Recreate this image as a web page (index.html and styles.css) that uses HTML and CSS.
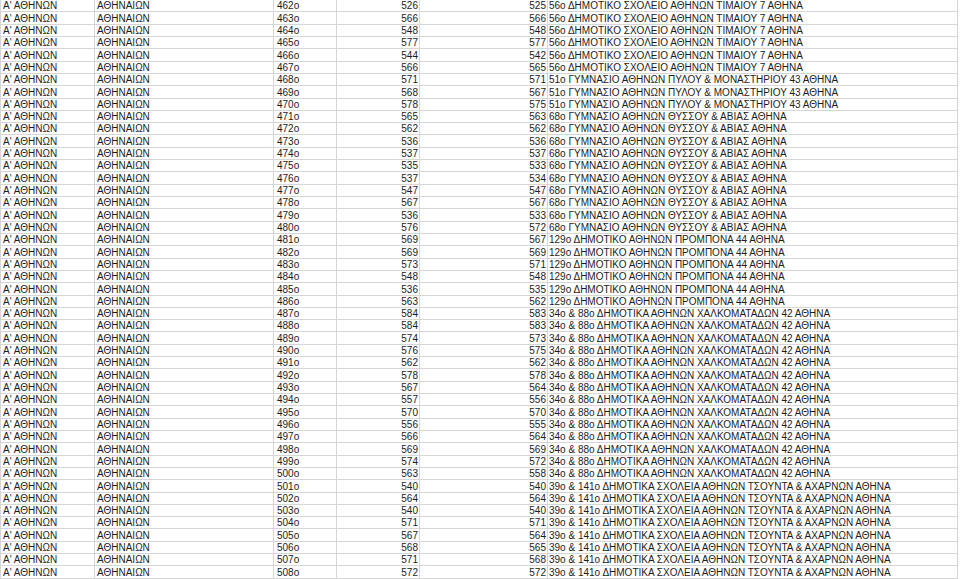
FILE: index.html
```html
<!DOCTYPE html>
<html lang="el">
<head>
<meta charset="utf-8">
<title>Αποτελέσματα</title>
<link rel="stylesheet" href="styles.css">
</head>
<body>
<table class="sheet">
<colgroup>
<col class="c-a"><col class="c-b"><col class="c-c"><col class="c-d"><col class="c-e"><col class="c-f">
</colgroup>
<tbody id="rows">
<tr><td>Α' ΑΘΗΝΩΝ</td><td>ΑΘΗΝΑΙΩΝ</td><td class="ord">462ο</td><td class="num">526</td><td class="num">525</td><td class="name">56ο ΔΗΜΟΤΙΚΟ ΣΧΟΛΕΙΟ ΑΘΗΝΩΝ ΤΙΜΑΙΟΥ 7 ΑΘΗΝΑ</td></tr>
<tr><td>Α' ΑΘΗΝΩΝ</td><td>ΑΘΗΝΑΙΩΝ</td><td class="ord">463ο</td><td class="num">566</td><td class="num">566</td><td class="name">56ο ΔΗΜΟΤΙΚΟ ΣΧΟΛΕΙΟ ΑΘΗΝΩΝ ΤΙΜΑΙΟΥ 7 ΑΘΗΝΑ</td></tr>
<tr><td>Α' ΑΘΗΝΩΝ</td><td>ΑΘΗΝΑΙΩΝ</td><td class="ord">464ο</td><td class="num">548</td><td class="num">548</td><td class="name">56ο ΔΗΜΟΤΙΚΟ ΣΧΟΛΕΙΟ ΑΘΗΝΩΝ ΤΙΜΑΙΟΥ 7 ΑΘΗΝΑ</td></tr>
<tr><td>Α' ΑΘΗΝΩΝ</td><td>ΑΘΗΝΑΙΩΝ</td><td class="ord">465ο</td><td class="num">577</td><td class="num">577</td><td class="name">56ο ΔΗΜΟΤΙΚΟ ΣΧΟΛΕΙΟ ΑΘΗΝΩΝ ΤΙΜΑΙΟΥ 7 ΑΘΗΝΑ</td></tr>
<tr><td>Α' ΑΘΗΝΩΝ</td><td>ΑΘΗΝΑΙΩΝ</td><td class="ord">466ο</td><td class="num">544</td><td class="num">542</td><td class="name">56ο ΔΗΜΟΤΙΚΟ ΣΧΟΛΕΙΟ ΑΘΗΝΩΝ ΤΙΜΑΙΟΥ 7 ΑΘΗΝΑ</td></tr>
<tr><td>Α' ΑΘΗΝΩΝ</td><td>ΑΘΗΝΑΙΩΝ</td><td class="ord">467ο</td><td class="num">566</td><td class="num">565</td><td class="name">56ο ΔΗΜΟΤΙΚΟ ΣΧΟΛΕΙΟ ΑΘΗΝΩΝ ΤΙΜΑΙΟΥ 7 ΑΘΗΝΑ</td></tr>
<tr><td>Α' ΑΘΗΝΩΝ</td><td>ΑΘΗΝΑΙΩΝ</td><td class="ord">468ο</td><td class="num">571</td><td class="num">571</td><td class="name">51ο ΓΥΜΝΑΣΙΟ ΑΘΗΝΩΝ ΠΥΛΟΥ &amp; ΜΟΝΑΣΤΗΡΙΟΥ 43 ΑΘΗΝΑ</td></tr>
<tr><td>Α' ΑΘΗΝΩΝ</td><td>ΑΘΗΝΑΙΩΝ</td><td class="ord">469ο</td><td class="num">568</td><td class="num">567</td><td class="name">51ο ΓΥΜΝΑΣΙΟ ΑΘΗΝΩΝ ΠΥΛΟΥ &amp; ΜΟΝΑΣΤΗΡΙΟΥ 43 ΑΘΗΝΑ</td></tr>
<tr><td>Α' ΑΘΗΝΩΝ</td><td>ΑΘΗΝΑΙΩΝ</td><td class="ord">470ο</td><td class="num">578</td><td class="num">575</td><td class="name">51ο ΓΥΜΝΑΣΙΟ ΑΘΗΝΩΝ ΠΥΛΟΥ &amp; ΜΟΝΑΣΤΗΡΙΟΥ 43 ΑΘΗΝΑ</td></tr>
<tr><td>Α' ΑΘΗΝΩΝ</td><td>ΑΘΗΝΑΙΩΝ</td><td class="ord">471ο</td><td class="num">565</td><td class="num">563</td><td class="name">68ο ΓΥΜΝΑΣΙΟ ΑΘΗΝΩΝ ΘΥΣΣΟΥ &amp; ΑΒΙΑΣ ΑΘΗΝΑ</td></tr>
<tr><td>Α' ΑΘΗΝΩΝ</td><td>ΑΘΗΝΑΙΩΝ</td><td class="ord">472ο</td><td class="num">562</td><td class="num">562</td><td class="name">68ο ΓΥΜΝΑΣΙΟ ΑΘΗΝΩΝ ΘΥΣΣΟΥ &amp; ΑΒΙΑΣ ΑΘΗΝΑ</td></tr>
<tr><td>Α' ΑΘΗΝΩΝ</td><td>ΑΘΗΝΑΙΩΝ</td><td class="ord">473ο</td><td class="num">536</td><td class="num">536</td><td class="name">68ο ΓΥΜΝΑΣΙΟ ΑΘΗΝΩΝ ΘΥΣΣΟΥ &amp; ΑΒΙΑΣ ΑΘΗΝΑ</td></tr>
<tr><td>Α' ΑΘΗΝΩΝ</td><td>ΑΘΗΝΑΙΩΝ</td><td class="ord">474ο</td><td class="num">537</td><td class="num">537</td><td class="name">68ο ΓΥΜΝΑΣΙΟ ΑΘΗΝΩΝ ΘΥΣΣΟΥ &amp; ΑΒΙΑΣ ΑΘΗΝΑ</td></tr>
<tr><td>Α' ΑΘΗΝΩΝ</td><td>ΑΘΗΝΑΙΩΝ</td><td class="ord">475ο</td><td class="num">535</td><td class="num">533</td><td class="name">68ο ΓΥΜΝΑΣΙΟ ΑΘΗΝΩΝ ΘΥΣΣΟΥ &amp; ΑΒΙΑΣ ΑΘΗΝΑ</td></tr>
<tr><td>Α' ΑΘΗΝΩΝ</td><td>ΑΘΗΝΑΙΩΝ</td><td class="ord">476ο</td><td class="num">537</td><td class="num">534</td><td class="name">68ο ΓΥΜΝΑΣΙΟ ΑΘΗΝΩΝ ΘΥΣΣΟΥ &amp; ΑΒΙΑΣ ΑΘΗΝΑ</td></tr>
<tr><td>Α' ΑΘΗΝΩΝ</td><td>ΑΘΗΝΑΙΩΝ</td><td class="ord">477ο</td><td class="num">547</td><td class="num">547</td><td class="name">68ο ΓΥΜΝΑΣΙΟ ΑΘΗΝΩΝ ΘΥΣΣΟΥ &amp; ΑΒΙΑΣ ΑΘΗΝΑ</td></tr>
<tr><td>Α' ΑΘΗΝΩΝ</td><td>ΑΘΗΝΑΙΩΝ</td><td class="ord">478ο</td><td class="num">567</td><td class="num">567</td><td class="name">68ο ΓΥΜΝΑΣΙΟ ΑΘΗΝΩΝ ΘΥΣΣΟΥ &amp; ΑΒΙΑΣ ΑΘΗΝΑ</td></tr>
<tr><td>Α' ΑΘΗΝΩΝ</td><td>ΑΘΗΝΑΙΩΝ</td><td class="ord">479ο</td><td class="num">536</td><td class="num">533</td><td class="name">68ο ΓΥΜΝΑΣΙΟ ΑΘΗΝΩΝ ΘΥΣΣΟΥ &amp; ΑΒΙΑΣ ΑΘΗΝΑ</td></tr>
<tr><td>Α' ΑΘΗΝΩΝ</td><td>ΑΘΗΝΑΙΩΝ</td><td class="ord">480ο</td><td class="num">576</td><td class="num">572</td><td class="name">68ο ΓΥΜΝΑΣΙΟ ΑΘΗΝΩΝ ΘΥΣΣΟΥ &amp; ΑΒΙΑΣ ΑΘΗΝΑ</td></tr>
<tr><td>Α' ΑΘΗΝΩΝ</td><td>ΑΘΗΝΑΙΩΝ</td><td class="ord">481ο</td><td class="num">569</td><td class="num">567</td><td class="name">129ο ΔΗΜΟΤΙΚΟ ΑΘΗΝΩΝ ΠΡΟΜΠΟΝΑ 44 ΑΘΗΝΑ</td></tr>
<tr><td>Α' ΑΘΗΝΩΝ</td><td>ΑΘΗΝΑΙΩΝ</td><td class="ord">482ο</td><td class="num">569</td><td class="num">569</td><td class="name">129ο ΔΗΜΟΤΙΚΟ ΑΘΗΝΩΝ ΠΡΟΜΠΟΝΑ 44 ΑΘΗΝΑ</td></tr>
<tr><td>Α' ΑΘΗΝΩΝ</td><td>ΑΘΗΝΑΙΩΝ</td><td class="ord">483ο</td><td class="num">573</td><td class="num">571</td><td class="name">129ο ΔΗΜΟΤΙΚΟ ΑΘΗΝΩΝ ΠΡΟΜΠΟΝΑ 44 ΑΘΗΝΑ</td></tr>
<tr><td>Α' ΑΘΗΝΩΝ</td><td>ΑΘΗΝΑΙΩΝ</td><td class="ord">484ο</td><td class="num">548</td><td class="num">548</td><td class="name">129ο ΔΗΜΟΤΙΚΟ ΑΘΗΝΩΝ ΠΡΟΜΠΟΝΑ 44 ΑΘΗΝΑ</td></tr>
<tr><td>Α' ΑΘΗΝΩΝ</td><td>ΑΘΗΝΑΙΩΝ</td><td class="ord">485ο</td><td class="num">536</td><td class="num">535</td><td class="name">129ο ΔΗΜΟΤΙΚΟ ΑΘΗΝΩΝ ΠΡΟΜΠΟΝΑ 44 ΑΘΗΝΑ</td></tr>
<tr><td>Α' ΑΘΗΝΩΝ</td><td>ΑΘΗΝΑΙΩΝ</td><td class="ord">486ο</td><td class="num">563</td><td class="num">562</td><td class="name">129ο ΔΗΜΟΤΙΚΟ ΑΘΗΝΩΝ ΠΡΟΜΠΟΝΑ 44 ΑΘΗΝΑ</td></tr>
<tr><td>Α' ΑΘΗΝΩΝ</td><td>ΑΘΗΝΑΙΩΝ</td><td class="ord">487ο</td><td class="num">584</td><td class="num">583</td><td class="name">34ο &amp; 88ο ΔΗΜΟΤΙΚΑ ΑΘΗΝΩΝ ΧΑΛΚΟΜΑΤΑΔΩΝ 42 ΑΘΗΝΑ</td></tr>
<tr><td>Α' ΑΘΗΝΩΝ</td><td>ΑΘΗΝΑΙΩΝ</td><td class="ord">488ο</td><td class="num">584</td><td class="num">583</td><td class="name">34ο &amp; 88ο ΔΗΜΟΤΙΚΑ ΑΘΗΝΩΝ ΧΑΛΚΟΜΑΤΑΔΩΝ 42 ΑΘΗΝΑ</td></tr>
<tr><td>Α' ΑΘΗΝΩΝ</td><td>ΑΘΗΝΑΙΩΝ</td><td class="ord">489ο</td><td class="num">574</td><td class="num">573</td><td class="name">34ο &amp; 88ο ΔΗΜΟΤΙΚΑ ΑΘΗΝΩΝ ΧΑΛΚΟΜΑΤΑΔΩΝ 42 ΑΘΗΝΑ</td></tr>
<tr><td>Α' ΑΘΗΝΩΝ</td><td>ΑΘΗΝΑΙΩΝ</td><td class="ord">490ο</td><td class="num">576</td><td class="num">575</td><td class="name">34ο &amp; 88ο ΔΗΜΟΤΙΚΑ ΑΘΗΝΩΝ ΧΑΛΚΟΜΑΤΑΔΩΝ 42 ΑΘΗΝΑ</td></tr>
<tr><td>Α' ΑΘΗΝΩΝ</td><td>ΑΘΗΝΑΙΩΝ</td><td class="ord">491ο</td><td class="num">562</td><td class="num">562</td><td class="name">34ο &amp; 88ο ΔΗΜΟΤΙΚΑ ΑΘΗΝΩΝ ΧΑΛΚΟΜΑΤΑΔΩΝ 42 ΑΘΗΝΑ</td></tr>
<tr><td>Α' ΑΘΗΝΩΝ</td><td>ΑΘΗΝΑΙΩΝ</td><td class="ord">492ο</td><td class="num">578</td><td class="num">578</td><td class="name">34ο &amp; 88ο ΔΗΜΟΤΙΚΑ ΑΘΗΝΩΝ ΧΑΛΚΟΜΑΤΑΔΩΝ 42 ΑΘΗΝΑ</td></tr>
<tr><td>Α' ΑΘΗΝΩΝ</td><td>ΑΘΗΝΑΙΩΝ</td><td class="ord">493ο</td><td class="num">567</td><td class="num">564</td><td class="name">34ο &amp; 88ο ΔΗΜΟΤΙΚΑ ΑΘΗΝΩΝ ΧΑΛΚΟΜΑΤΑΔΩΝ 42 ΑΘΗΝΑ</td></tr>
<tr><td>Α' ΑΘΗΝΩΝ</td><td>ΑΘΗΝΑΙΩΝ</td><td class="ord">494ο</td><td class="num">557</td><td class="num">556</td><td class="name">34ο &amp; 88ο ΔΗΜΟΤΙΚΑ ΑΘΗΝΩΝ ΧΑΛΚΟΜΑΤΑΔΩΝ 42 ΑΘΗΝΑ</td></tr>
<tr><td>Α' ΑΘΗΝΩΝ</td><td>ΑΘΗΝΑΙΩΝ</td><td class="ord">495ο</td><td class="num">570</td><td class="num">570</td><td class="name">34ο &amp; 88ο ΔΗΜΟΤΙΚΑ ΑΘΗΝΩΝ ΧΑΛΚΟΜΑΤΑΔΩΝ 42 ΑΘΗΝΑ</td></tr>
<tr><td>Α' ΑΘΗΝΩΝ</td><td>ΑΘΗΝΑΙΩΝ</td><td class="ord">496ο</td><td class="num">556</td><td class="num">555</td><td class="name">34ο &amp; 88ο ΔΗΜΟΤΙΚΑ ΑΘΗΝΩΝ ΧΑΛΚΟΜΑΤΑΔΩΝ 42 ΑΘΗΝΑ</td></tr>
<tr><td>Α' ΑΘΗΝΩΝ</td><td>ΑΘΗΝΑΙΩΝ</td><td class="ord">497ο</td><td class="num">566</td><td class="num">564</td><td class="name">34ο &amp; 88ο ΔΗΜΟΤΙΚΑ ΑΘΗΝΩΝ ΧΑΛΚΟΜΑΤΑΔΩΝ 42 ΑΘΗΝΑ</td></tr>
<tr><td>Α' ΑΘΗΝΩΝ</td><td>ΑΘΗΝΑΙΩΝ</td><td class="ord">498ο</td><td class="num">569</td><td class="num">569</td><td class="name">34ο &amp; 88ο ΔΗΜΟΤΙΚΑ ΑΘΗΝΩΝ ΧΑΛΚΟΜΑΤΑΔΩΝ 42 ΑΘΗΝΑ</td></tr>
<tr><td>Α' ΑΘΗΝΩΝ</td><td>ΑΘΗΝΑΙΩΝ</td><td class="ord">499ο</td><td class="num">574</td><td class="num">572</td><td class="name">34ο &amp; 88ο ΔΗΜΟΤΙΚΑ ΑΘΗΝΩΝ ΧΑΛΚΟΜΑΤΑΔΩΝ 42 ΑΘΗΝΑ</td></tr>
<tr><td>Α' ΑΘΗΝΩΝ</td><td>ΑΘΗΝΑΙΩΝ</td><td class="ord">500ο</td><td class="num">563</td><td class="num">558</td><td class="name">34ο &amp; 88ο ΔΗΜΟΤΙΚΑ ΑΘΗΝΩΝ ΧΑΛΚΟΜΑΤΑΔΩΝ 42 ΑΘΗΝΑ</td></tr>
<tr><td>Α' ΑΘΗΝΩΝ</td><td>ΑΘΗΝΑΙΩΝ</td><td class="ord">501ο</td><td class="num">540</td><td class="num">540</td><td class="name">39ο &amp; 141ο ΔΗΜΟΤΙΚΑ ΣΧΟΛΕΙΑ ΑΘΗΝΩΝ ΤΣΟΥΝΤΑ &amp; ΑΧΑΡΝΩΝ ΑΘΗΝΑ</td></tr>
<tr><td>Α' ΑΘΗΝΩΝ</td><td>ΑΘΗΝΑΙΩΝ</td><td class="ord">502ο</td><td class="num">564</td><td class="num">564</td><td class="name">39ο &amp; 141ο ΔΗΜΟΤΙΚΑ ΣΧΟΛΕΙΑ ΑΘΗΝΩΝ ΤΣΟΥΝΤΑ &amp; ΑΧΑΡΝΩΝ ΑΘΗΝΑ</td></tr>
<tr><td>Α' ΑΘΗΝΩΝ</td><td>ΑΘΗΝΑΙΩΝ</td><td class="ord">503ο</td><td class="num">540</td><td class="num">540</td><td class="name">39ο &amp; 141ο ΔΗΜΟΤΙΚΑ ΣΧΟΛΕΙΑ ΑΘΗΝΩΝ ΤΣΟΥΝΤΑ &amp; ΑΧΑΡΝΩΝ ΑΘΗΝΑ</td></tr>
<tr><td>Α' ΑΘΗΝΩΝ</td><td>ΑΘΗΝΑΙΩΝ</td><td class="ord">504ο</td><td class="num">571</td><td class="num">571</td><td class="name">39ο &amp; 141ο ΔΗΜΟΤΙΚΑ ΣΧΟΛΕΙΑ ΑΘΗΝΩΝ ΤΣΟΥΝΤΑ &amp; ΑΧΑΡΝΩΝ ΑΘΗΝΑ</td></tr>
<tr><td>Α' ΑΘΗΝΩΝ</td><td>ΑΘΗΝΑΙΩΝ</td><td class="ord">505ο</td><td class="num">567</td><td class="num">564</td><td class="name">39ο &amp; 141ο ΔΗΜΟΤΙΚΑ ΣΧΟΛΕΙΑ ΑΘΗΝΩΝ ΤΣΟΥΝΤΑ &amp; ΑΧΑΡΝΩΝ ΑΘΗΝΑ</td></tr>
<tr><td>Α' ΑΘΗΝΩΝ</td><td>ΑΘΗΝΑΙΩΝ</td><td class="ord">506ο</td><td class="num">568</td><td class="num">565</td><td class="name">39ο &amp; 141ο ΔΗΜΟΤΙΚΑ ΣΧΟΛΕΙΑ ΑΘΗΝΩΝ ΤΣΟΥΝΤΑ &amp; ΑΧΑΡΝΩΝ ΑΘΗΝΑ</td></tr>
<tr><td>Α' ΑΘΗΝΩΝ</td><td>ΑΘΗΝΑΙΩΝ</td><td class="ord">507ο</td><td class="num">571</td><td class="num">568</td><td class="name">39ο &amp; 141ο ΔΗΜΟΤΙΚΑ ΣΧΟΛΕΙΑ ΑΘΗΝΩΝ ΤΣΟΥΝΤΑ &amp; ΑΧΑΡΝΩΝ ΑΘΗΝΑ</td></tr>
<tr><td>Α' ΑΘΗΝΩΝ</td><td>ΑΘΗΝΑΙΩΝ</td><td class="ord">508ο</td><td class="num">572</td><td class="num">572</td><td class="name">39ο &amp; 141ο ΔΗΜΟΤΙΚΑ ΣΧΟΛΕΙΑ ΑΘΗΝΩΝ ΤΣΟΥΝΤΑ &amp; ΑΧΑΡΝΩΝ ΑΘΗΝΑ</td></tr>
</tbody>
</table>
</body>
</html>
```
FILE: styles.css
```css
html, body {
  margin: 0;
  padding: 0;
  background: #ffffff;
}
body {
  overflow: hidden;
}
.sheet {
  border-collapse: collapse;
  table-layout: fixed;
  width: 957px;
  margin-top: -1px;
  font-family: "Liberation Sans", Arial, sans-serif;
  font-size: 10px;
  color: #1c1c1c;
}
.c-a { width: 94px; }
.c-b { width: 179px; }
.c-c { width: 63px; }
.c-d { width: 83px; }
.c-e { width: 128px; }
.c-f { width: 410px; }
.sheet td {
  border: 1px solid #d6d6d6;
  height: 12.32px;
  padding: 0 2px 0 2px;
  line-height: 11px;
  vertical-align: bottom;
  white-space: nowrap;
  overflow: hidden;
  box-sizing: border-box;
}
.sheet td.ord {
  padding-left: 3px;
}
.sheet td.num {
  text-align: right;
  padding-right: 1px;
}
.sheet td.name {
  padding-left: 1px;
}
```
